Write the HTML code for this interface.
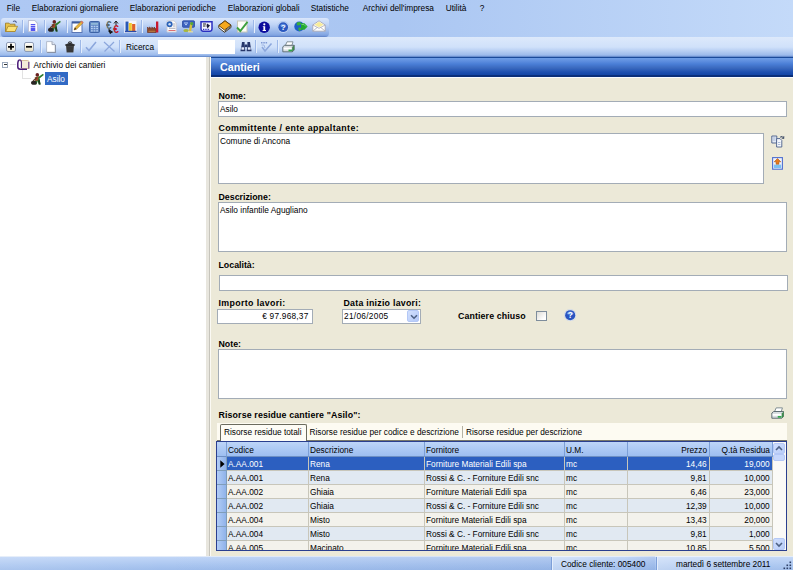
<!DOCTYPE html>
<html lang="it">
<head>
<meta charset="utf-8">
<title>Cantieri</title>
<style>
*{box-sizing:border-box;margin:0;padding:0}
html,body{width:793px;height:570px;overflow:hidden}
body{position:relative;background:#ece9d8;font-family:"Liberation Sans",sans-serif;font-size:8.3px;color:#000;line-height:10px}
.a{position:absolute}
.t{position:absolute;white-space:nowrap;height:10px;line-height:10px}
.b{font-weight:bold}
.l{font-size:8.8px}
#menubar{left:0;top:0;width:793px;height:37px;background:linear-gradient(90deg,#aec8f3 0%,#aac6f2 50%,#c4daf9 100%)}
#tb1{left:1px;top:17.5px;width:327.5px;height:19.5px;border-radius:3px 3px 4px 3px;background:linear-gradient(180deg,#dbe7fb 0%,#bfd4f6 35%,#88aae4 85%,#7c9fde 92%,#6488cc 96%,#6488cc 100%)}
#tb2{left:0;top:37.3px;width:793px;height:19.7px;background:linear-gradient(180deg,#dde9fb 0%,#d0e1fa 50%,#9fbdec 88%,#8eafe6 93%,#6a8fce 97%,#6a8fce 100%)}
.sep{position:absolute;width:1px;height:13px;background:#9db8e8;box-shadow:1px 0 0 #e4eefc}
#tree{left:0;top:57px;width:206px;height:500px;background:#fff}
#split{left:206px;top:57px;width:5px;height:499px;background:#e8e6de;border-right:1px solid #fbfaf4}
#split i{position:absolute;left:3px;top:0;width:1px;height:100%;background:#c6c4bc}
#hdr{left:211px;top:57px;width:582px;height:21px;background:linear-gradient(180deg,#1a4a9a 0px,#1a4a9a 1px,#6b9be5 1.5px,#5f8fdf 4px,#4a7ed6 7px,#3a69be 11px,#1e50b0 15px,#1447a8 17.5px,#0a2f7a 18.5px,#0a2f7a 19.5px,#f8fbff 20px,#f8fbff 21px)}
#status{left:0;top:555.5px;width:793px;height:15px;background:linear-gradient(180deg,#c1d6f7 0%,#adc8f1 50%,#9cbbea 100%);border-top:1px solid #e3ecf9}
.inp{position:absolute;background:#fff;border:1px solid #a3acb6}

#grid{left:216px;top:441px;width:571px;height:110px;background:#fff;border:1px solid #2a3f8f;overflow:hidden}
#grid .h{position:absolute;top:0;height:15px;background:linear-gradient(180deg,#bdd5f8,#9dbef1);border-right:1px solid #7c9fd6;border-bottom:1px solid #6d8fc4}
#grid .r{position:absolute;left:0;width:556px;height:14px;border-bottom:1px solid #c8c6ba}
#grid .r i{font-style:normal;position:absolute;top:0;height:13px;border-right:1px solid #c8c6ba}
#grid .rh{position:absolute;left:0;width:10px;height:14px;background:linear-gradient(90deg,#b2cdf6,#8fb2ea);border-right:1px solid #7f9db9;border-bottom:1px solid #7f9db9}
.g{position:absolute;white-space:nowrap;height:10px;line-height:10px}
</style>
</head>
<body>
<div id="menubar" class="a"></div>
<div id="tb1" class="a"></div>
<div id="tb2" class="a"></div>
<div id="tree" class="a"></div>
<div id="split" class="a"><i></i></div>
<div id="hdr" class="a"></div>
<div id="status" class="a"></div>

<!-- menu -->
<span class="t m" style="left:6.7px;top:2.6px">File</span>
<span class="t m" style="left:31.7px;top:2.6px">Elaborazioni giornaliere</span>
<span class="t m" style="left:129.7px;top:2.6px">Elaborazioni periodiche</span>
<span class="t m" style="left:227.7px;top:2.6px">Elaborazioni globali</span>
<span class="t m" style="left:310.7px;top:2.6px">Statistiche</span>
<span class="t m" style="left:362.7px;top:2.6px">Archivi dell'impresa</span>
<span class="t m" style="left:445.7px;top:2.6px">Utilità</span>
<span class="t m" style="left:479.7px;top:2.6px">?</span>
<!-- toolbar2 text -->
<span class="t" id="ric" style="left:126px;top:42px">Ricerca</span>
<div class="a" id="sbox" style="left:158px;top:40px;width:77px;height:14px;background:#fff"></div>
<!-- tree -->
<span class="t" id="tr1" style="left:33.5px;top:59.5px">Archivio dei cantieri</span>
<div class="a" id="sel" style="left:45px;top:72px;width:23px;height:13px;background:#316ac5"></div>
<span class="t" id="tr2" style="left:47px;top:74px;color:#fff">Asilo</span>
<!-- header -->
<span class="t b" id="htx" style="left:220px;top:61px;color:#fff;font-size:10.7px;line-height:12px;height:12px">Cantieri</span>

<!-- form -->
<span class="t b l" style="left:218.5px;top:91px">Nome:</span>
<div class="inp" style="left:218px;top:101.3px;width:569px;height:16.2px"></div>
<span class="t" style="left:220px;top:103.7px">Asilo</span>
<span class="t b l" style="letter-spacing:0.4px;left:218.5px;top:123px">Committente / ente appaltante:</span>
<div class="inp" style="left:218px;top:133px;width:545.7px;height:50.5px"></div>
<span class="t" style="left:220px;top:136.3px">Comune di Ancona</span>
<span class="t b l" style="left:218.5px;top:192px">Descrizione:</span>
<div class="inp" style="left:218px;top:202px;width:569px;height:50.4px"></div>
<span class="t" style="left:220px;top:205.3px">Asilo infantile Agugliano</span>
<span class="t b l" style="left:218.5px;top:260px">Località:</span>
<div class="inp" style="left:219px;top:274.7px;width:568.5px;height:16px"></div>
<span class="t b l" style="letter-spacing:0.37px;left:218.5px;top:297.5px">Importo lavori:</span>
<div class="inp" style="left:217px;top:308.6px;width:95.7px;height:15.4px"></div>
<span class="t" style="right:484.5px;top:311px;letter-spacing:0.22px">€ 97.968,37</span>
<span class="t b l" style="letter-spacing:0.25px;left:343.5px;top:297.5px">Data inizio lavori:</span>
<div class="inp" style="left:341.5px;top:308.6px;width:79.3px;height:15.4px"></div>
<span class="t" style="left:344px;top:311px;letter-spacing:0.3px">21/06/2005</span>
<span class="t b l" style="left:458px;top:311px;letter-spacing:.12px">Cantiere chiuso</span>
<div class="inp" style="left:536px;top:310.8px;width:10.6px;height:10.6px;border-color:#7e8d9c;background:linear-gradient(135deg,#dddcd6,#fff 80%)"></div>
<span class="t b l" style="left:218.5px;top:338.5px">Note:</span>
<div class="inp" style="left:217.7px;top:349px;width:569.3px;height:50.3px"></div>
<span class="t b l" style="letter-spacing:0.14px;left:218.5px;top:410.3px">Risorse residue cantiere "Asilo":</span>

<!-- tabs -->
<div class="a" id="tabstrip" style="left:217px;top:422.5px;width:570px;height:18.5px;background:#fdfbf2;border-bottom:1.5px solid #77776a"></div>
<div class="a" id="tab1" style="left:220.3px;top:424px;width:87px;height:17px;background:#fdfcf6;border:1px solid #6b6b5e;border-bottom:none;border-radius:2px 2px 0 0"></div>
<span class="t tb" style="left:224px;top:427px">Risorse residue totali</span>
<span class="t tb" style="left:309.5px;top:427px">Risorse residue per codice e descrizione</span>
<div class="a" style="left:461.7px;top:426px;width:1px;height:12px;background:#b5b2a4"></div>
<span class="t tb" style="left:466px;top:427px">Risorse residue per descrizione</span>
<!-- grid -->
<div class="a" id="grid">
<div class="h" style="left:0;width:10px"></div>
<div class="h" style="left:10px;width:82px"><span class="g" style="left:1px;top:2.5px">Codice</span></div>
<div class="h" style="left:92px;width:116px"><span class="g" style="left:1px;top:2.5px">Descrizione</span></div>
<div class="h" style="left:208px;width:140px"><span class="g" style="left:1px;top:2.5px">Fornitore</span></div>
<div class="h" style="left:348px;width:63px"><span class="g" style="left:1px;top:2.5px">U.M.</span></div>
<div class="h" style="left:411px;width:82px"><span class="g" style="right:2px;top:2.5px">Prezzo</span></div>
<div class="h" style="left:493px;width:63px"><span class="g" style="right:2px;top:2.5px">Q.tà Residua</span></div>
<div class="r" style="top:15px;background:#2c5fc0;color:#fff"><div class="rh"></div><svg class="a" style="left:2.7px;top:3px" width="5" height="8" viewBox="0 0 5 8"><path d="M.3 .3 L4.6 4 L.3 7.7Z" fill="#000"/></svg><i style="left:10px;width:82px"><span class="g" style="left:1px;top:2px">A.AA.001</span></i><i style="left:92px;width:116px"><span class="g" style="left:1px;top:2px">Rena</span></i><i style="left:208px;width:140px"><span class="g" style="left:1px;top:2px">Forniture Materiali Edili spa</span></i><i style="left:348px;width:63px"><span class="g" style="left:1px;top:2px">mc</span></i><i style="left:411px;width:82px"><span class="g" style="right:2.3px;top:2px">14,46</span></i><i style="left:493px;width:63px"><span class="g" style="right:2.3px;top:2px">19,000</span></i></div>
<div class="r" style="top:29px;background:#e1e9f2;color:#000"><div class="rh"></div><i style="left:10px;width:82px"><span class="g" style="left:1px;top:2px">A.AA.001</span></i><i style="left:92px;width:116px"><span class="g" style="left:1px;top:2px">Rena</span></i><i style="left:208px;width:140px"><span class="g" style="left:1px;top:2px">Rossi &amp; C. - Forniture Edili snc</span></i><i style="left:348px;width:63px"><span class="g" style="left:1px;top:2px">mc</span></i><i style="left:411px;width:82px"><span class="g" style="right:2.3px;top:2px">9,81</span></i><i style="left:493px;width:63px"><span class="g" style="right:2.3px;top:2px">10,000</span></i></div>
<div class="r" style="top:43px;background:#f3f2ec;color:#000"><div class="rh"></div><i style="left:10px;width:82px"><span class="g" style="left:1px;top:2px">A.AA.002</span></i><i style="left:92px;width:116px"><span class="g" style="left:1px;top:2px">Ghiaia</span></i><i style="left:208px;width:140px"><span class="g" style="left:1px;top:2px">Forniture Materiali Edili spa</span></i><i style="left:348px;width:63px"><span class="g" style="left:1px;top:2px">mc</span></i><i style="left:411px;width:82px"><span class="g" style="right:2.3px;top:2px">6,46</span></i><i style="left:493px;width:63px"><span class="g" style="right:2.3px;top:2px">23,000</span></i></div>
<div class="r" style="top:57px;background:#e1e9f2;color:#000"><div class="rh"></div><i style="left:10px;width:82px"><span class="g" style="left:1px;top:2px">A.AA.002</span></i><i style="left:92px;width:116px"><span class="g" style="left:1px;top:2px">Ghiaia</span></i><i style="left:208px;width:140px"><span class="g" style="left:1px;top:2px">Rossi &amp; C. - Forniture Edili snc</span></i><i style="left:348px;width:63px"><span class="g" style="left:1px;top:2px">mc</span></i><i style="left:411px;width:82px"><span class="g" style="right:2.3px;top:2px">12,39</span></i><i style="left:493px;width:63px"><span class="g" style="right:2.3px;top:2px">10,000</span></i></div>
<div class="r" style="top:71px;background:#f3f2ec;color:#000"><div class="rh"></div><i style="left:10px;width:82px"><span class="g" style="left:1px;top:2px">A.AA.004</span></i><i style="left:92px;width:116px"><span class="g" style="left:1px;top:2px">Misto</span></i><i style="left:208px;width:140px"><span class="g" style="left:1px;top:2px">Forniture Materiali Edili spa</span></i><i style="left:348px;width:63px"><span class="g" style="left:1px;top:2px">mc</span></i><i style="left:411px;width:82px"><span class="g" style="right:2.3px;top:2px">13,43</span></i><i style="left:493px;width:63px"><span class="g" style="right:2.3px;top:2px">20,000</span></i></div>
<div class="r" style="top:85px;background:#e1e9f2;color:#000"><div class="rh"></div><i style="left:10px;width:82px"><span class="g" style="left:1px;top:2px">A.AA.004</span></i><i style="left:92px;width:116px"><span class="g" style="left:1px;top:2px">Misto</span></i><i style="left:208px;width:140px"><span class="g" style="left:1px;top:2px">Rossi &amp; C. - Forniture Edili snc</span></i><i style="left:348px;width:63px"><span class="g" style="left:1px;top:2px">mc</span></i><i style="left:411px;width:82px"><span class="g" style="right:2.3px;top:2px">9,81</span></i><i style="left:493px;width:63px"><span class="g" style="right:2.3px;top:2px">1,000</span></i></div>
<div class="r" style="top:99px;background:#f3f2ec;color:#000"><div class="rh"></div><i style="left:10px;width:82px"><span class="g" style="left:1px;top:2px">A.AA.005</span></i><i style="left:92px;width:116px"><span class="g" style="left:1px;top:2px">Macinato</span></i><i style="left:208px;width:140px"><span class="g" style="left:1px;top:2px">Forniture Materiali Edili spa</span></i><i style="left:348px;width:63px"><span class="g" style="left:1px;top:2px">mc</span></i><i style="left:411px;width:82px"><span class="g" style="right:2.3px;top:2px">10,85</span></i><i style="left:493px;width:63px"><span class="g" style="right:2.3px;top:2px">5,500</span></i></div>
<div class="a" id="sb" style="left:556px;top:0;width:13px;height:109px;background:#fbfaf7">
<div class="a" style="left:0;top:1px;width:12px;height:11px;border:1px solid #b4c8f6;border-radius:2px;background:linear-gradient(135deg,#cfdefd,#b9cdf8)"></div>
<svg class="a" style="left:2px;top:3px" width="8" height="7" viewBox="0 0 8 7"><path d="M1 5 L4 2 L7 5" fill="none" stroke="#4d6185" stroke-width="1.6"/></svg>
<div class="a" style="left:0;top:12px;width:12px;height:7px;border:1px solid #b4c8f6;border-radius:2px;background:#c6d7fc"></div>
<div class="a" style="left:0;top:96px;width:12px;height:12px;border:1px solid #b4c8f6;border-radius:2px;background:linear-gradient(135deg,#cfdefd,#b9cdf8)"></div>
<svg class="a" style="left:2px;top:99px" width="8" height="7" viewBox="0 0 8 7"><path d="M1 2 L4 5 L7 2" fill="none" stroke="#4d6185" stroke-width="1.6"/></svg>
</div>
</div>
<!-- status -->
<div class="a" style="left:0;top:556px;width:551px;height:14px;background:linear-gradient(90deg,rgba(255,255,255,.12),rgba(255,255,255,0) 30%,rgba(60,100,180,.10))"></div>
<div class="a" style="left:552px;top:556px;width:103px;height:14px;background:linear-gradient(90deg,rgba(255,255,255,.35),rgba(255,255,255,0) 70%,rgba(60,100,180,.10))"></div>
<div class="a" style="left:657px;top:556px;width:136px;height:14px;background:linear-gradient(90deg,rgba(255,255,255,.35),rgba(255,255,255,.05) 80%)"></div>
<div class="a" style="left:551px;top:557px;width:1px;height:13px;background:#7d9fd8;box-shadow:1px 0 0 #e4eefc"></div>
<div class="a" style="left:655.5px;top:557px;width:1px;height:13px;background:#7d9fd8;box-shadow:1px 0 0 #e4eefc"></div>
<svg class="a" style="left:783px;top:561px" width="10" height="9" viewBox="0 0 10 9"><g fill="#2d3f66"><rect x="6.5" y=".5" width="1.6" height="1.6"/><rect x="3.5" y="3.5" width="1.6" height="1.6"/><rect x="6.5" y="3.5" width="1.6" height="1.6"/><rect x=".5" y="6.5" width="1.6" height="1.6"/><rect x="3.5" y="6.5" width="1.6" height="1.6"/><rect x="6.5" y="6.5" width="1.6" height="1.6"/></g></svg>
<span class="t st" style="left:561px;top:559px">Codice cliente: 005400</span>
<span class="t st" style="left:676px;top:559px">martedì 6 settembre 2011</span>
<!-- ICONS -->
<!-- toolbar1 icons -->
<div class="sep" style="left:22px;top:20px"></div>
<div class="sep" style="left:44px;top:20px"></div>
<div class="sep" style="left:66px;top:20px"></div>
<div class="sep" style="left:141px;top:20px"></div>
<div class="sep" style="left:253px;top:20px"></div>
<svg class="a" style="left:5px;top:19.8px" width="13" height="12.6" viewBox="0 0 13 12" preserveAspectRatio="none"><path d="M8 1.5 Q10 0 11.5 2.5" fill="none" stroke="#4a5a8a" stroke-width="1"/><path d="M0.5 3 L4 3 L5 4 L10 4 L10 11 L0.5 11 Z" fill="#e9c24a" stroke="#9a7a20" stroke-width=".8"/><path d="M0.8 11 L3 6 L12.5 6 L10 11 Z" fill="#fbe27a" stroke="#a8862a" stroke-width=".8"/></svg>
<svg class="a" style="left:28px;top:20px" width="10" height="12.3" viewBox="0 0 11 12" preserveAspectRatio="none"><path d="M.5 .5 L7.5 .5 L10.5 3.5 L10.5 11.5 L.5 11.5 Z" fill="#fdfdff" stroke="#b9bfd6" stroke-width="1"/><path d="M3 4.5h5M3 6.5h5M3 8.5h5M3 10h5" stroke="#5555f0" stroke-width="1.4"/></svg>
<svg class="a" style="left:48px;top:20px" width="14" height="12" viewBox="0 0 14 12"><circle cx="6.3" cy="1.9" r="1.8" fill="#6a2020"/><path d="M4.5 4 L8 3.5 L12 .8 L12.8 2 L8.5 5.5 L9.5 11.5 L7.8 11.5 L6.8 8 L5.5 11.5 L3.8 11.5 Z" fill="#2b7a2b"/><path d="M3.6 4.6 L7.6 3.6 L7 7.4 L4.6 8 Z" fill="#a8442a"/><path d="M8.6 6 L9.6 11.6 L7.8 11.6 L7 8Z" fill="#1a3a1a"/><ellipse cx="2.8" cy="9.8" rx="2.8" ry="2" fill="#2a2424"/><path d="M2 8 L6 4.5" stroke="#5a3a2a" stroke-width="1.1"/></svg>
<svg class="a" style="left:71px;top:20px" width="13" height="13" viewBox="0 0 13 13"><rect x="1" y="2" width="10" height="10.5" fill="#fff" stroke="#5b77b5" stroke-width="1"/><rect x="1" y="1.5" width="10" height="2" fill="#3e5c9e"/><path d="M3 10 L4 7.5 L10.5 1 L12.3 2.6 L5.6 9.2 Z" fill="#e8b53a" stroke="#9a6a1a" stroke-width=".5"/><path d="M3 10 L4 7.6 L5.4 9.1 Z" fill="#3a2a1a"/><path d="M10.5 1 L12.3 2.6 L11.5 3.4 L9.7 1.8Z" fill="#e06a6a"/></svg>
<svg class="a" style="left:89px;top:20.5px" width="11" height="12" viewBox="0 0 11 12"><rect x=".5" y=".5" width="10" height="11" rx="1" fill="#5c83c2" stroke="#3d63a5" stroke-width="1"/><rect x="2" y="1.8" width="7" height="2" fill="#8fb8d8"/><path d="M2 5.5h1.8M4.6 5.5h1.8M7.2 5.5h1.8M2 7.7h1.8M4.6 7.7h1.8M7.2 7.7h1.8M2 9.9h1.8M4.6 9.9h1.8M7.2 9.9h1.8" stroke="#b6d0f2" stroke-width="1.3"/></svg>
<svg class="a" style="left:106px;top:19.5px" width="14" height="14" viewBox="0 0 14 14"><text x="0" y="8.5" font-family="Liberation Sans,sans-serif" font-size="10" font-weight="bold" fill="#5a6a6a">€</text><text x="7.2" y="13" font-family="Liberation Sans,sans-serif" font-size="10" font-weight="bold" fill="#c01828">€</text><path d="M8 3.5 L10 1 L12 3.5 M10 1 L10 5" stroke="#222" stroke-width="1" fill="none"/><path d="M3 9 L3 12 L5 12 M4 10.5 L6.5 12 L4 13.5Z" stroke="#111" stroke-width=".9" fill="#111"/></svg>
<svg class="a" style="left:124px;top:20px" width="13" height="13" viewBox="0 0 13 13"><rect x=".5" y=".5" width="12" height="12" fill="#f4f6fc" stroke="#dfe6f6" stroke-width="1"/><rect x="1.5" y="1.5" width="3" height="9.5" fill="#2a5ab8"/><rect x="4.8" y="3" width="3" height="8" fill="#f0c830"/><rect x="8.1" y="4" width="3.2" height="7" fill="#e0622a"/><path d="M1 11.5h11.5" stroke="#2a4aa8" stroke-width="1.4"/></svg>
<svg class="a" style="left:146.5px;top:20.5px" width="12" height="12" viewBox="0 0 12 12"><path d="M.5 11.5 L.5 6 L2.5 8 L2.5 6 L4.8 8 L4.8 6 L7 8 L7 6 L9 8 L9 11.5 Z" fill="#8e4a2a" stroke="#6a2a1a" stroke-width=".6"/><rect x="9" y=".5" width="2.3" height="11" fill="#c8182e"/><path d="M1.5 10.3h7" stroke="#c88a4a" stroke-width=".8"/></svg>
<svg class="a" style="left:165.5px;top:20px" width="11" height="12.5" viewBox="0 0 11 12.5"><path d="M1 .8 L8 .8 L10.3 3 L10.3 12 L1 12 Z" fill="#fcfcfc" stroke="#c9c9d2" stroke-width=".9"/><circle cx="3.6" cy="4.3" r="3" fill="#2a62b8"/><circle cx="3.6" cy="4.3" r="1.2" fill="#cfe0f8"/><path d="M7 4h2.4M7 6h2.4M3 8.3h6.4" stroke="#9a9aa8" stroke-width=".8"/><path d="M2.5 10.5h7" stroke="#e07070" stroke-width="1"/></svg>
<svg class="a" style="left:182px;top:20px" width="13" height="13" viewBox="0 0 13 13"><rect x=".5" y=".8" width="12" height="6.5" rx=".8" fill="#3c62c0" stroke="#2a4aa0" stroke-width=".8"/><path d="M2 3 h4 M3 4.6h2" stroke="#b8d0f8" stroke-width="1"/><path d="M8.5 2 L10.5 4.5 L9 12 L6.5 12 Z" fill="#d6c040"/><circle cx="9.8" cy="3.6" r="1.6" fill="#58a838"/><ellipse cx="4" cy="10.5" rx="2.6" ry="1.5" fill="#a8b83a"/><path d="M6 11.8h5" stroke="#e8e0a0" stroke-width="1.2"/></svg>
<svg class="a" style="left:200px;top:21px" width="13" height="11" viewBox="0 0 13 11"><path d="M1 .8 H12 V8 Q12 10.3 9.5 10.3 H3.5 Q1 10.3 1 8 Z" fill="#f4f4ff" stroke="#2b2fc0" stroke-width="1.5"/><path d="M3 3h3M3 5h2.5" stroke="#222" stroke-width="1.1"/><path d="M7 2.5 L10 4.5 L7.5 7.5 L6.5 5 Z" fill="#1a1a3a"/><path d="M3 8.3h7" stroke="#2b2fc0" stroke-width="1.2" stroke-dasharray="1.3 1"/></svg>
<svg class="a" style="left:217.5px;top:19.5px" width="14" height="13" viewBox="0 0 14 13"><path d="M.8 5.5 L7 .8 L13 5.2 L13 7.5 L6.5 12.3 L.8 7.8 Z" fill="#fff" stroke="#3a2a10" stroke-width=".9"/><path d="M.8 5.5 L7 .8 L13 5.2 L6.5 10 Z" fill="#f6a81c" stroke="#5a3a08" stroke-width=".9"/><path d="M6.5 11.2 L12.5 6.6" stroke="#222" stroke-width=".8"/></svg>
<svg class="a" style="left:236px;top:19.5px" width="12.5" height="13" viewBox="0 0 12.5 13"><rect x="1.5" y="1" width="9.5" height="11" fill="#fdfdf8" stroke="#c8c8b8" stroke-width="1"/><path d="M1 7.5 L4.3 11 L11.5 1.8" fill="none" stroke="#3da03d" stroke-width="1.9"/></svg>
<svg class="a" style="left:258px;top:20.5px" width="12.4" height="12.4" viewBox="0 0 12.4 12.4"><circle cx="6.2" cy="6.2" r="5.7" fill="#0c0c9c"/><circle cx="6.3" cy="3.3" r="1.1" fill="#fff"/><path d="M4.8 5.2 H7.2 V9 H8 V9.9 H4.6 V9 H5.4 V6.1 H4.8 Z" fill="#fff"/></svg>
<svg class="a" style="left:276.5px;top:20.5px" width="12.4" height="12.4" viewBox="0 0 12.4 12.4"><circle cx="6.2" cy="6.2" r="5.8" fill="#d4e2f8" stroke="#9db8e6" stroke-width=".6"/><circle cx="6.2" cy="6.2" r="4.9" fill="#2a58c0"/><path d="M3 5 A3.4 3.4 0 0 1 9.4 5 Q6 6.5 3 5Z" fill="#5e8ee0"/><text x="6.2" y="9.2" text-anchor="middle" font-family="Liberation Sans,sans-serif" font-size="8" font-weight="bold" fill="#fff">?</text></svg>
<svg class="a" style="left:293.5px;top:21px" width="14" height="11" viewBox="0 0 14 11"><circle cx="5.3" cy="5.5" r="5" fill="#1f5fc8"/><path d="M3 1.5 Q6 .5 7.5 2 Q6.5 4.5 4 4.5 Q2 4 3 1.5Z M4.5 6.5 Q7 6 7.5 8 Q6.5 10 5 10 Q4 8 4.5 6.5Z" fill="#38b038"/><path d="M7 2.2 L10.5 2.2 L13.6 5.5 L10.5 8.8 L7 8.8 Z" fill="#22a832"/><path d="M7.5 3.5 L10 3.5 L12 5.5" stroke="#7ae07a" stroke-width=".8" fill="none"/></svg>
<svg class="a" style="left:311.5px;top:20px" width="14" height="12" viewBox="0 0 14 12"><path d="M.8 5 L7 .8 L13.2 5 L13.2 11.2 L.8 11.2 Z" fill="#fff" stroke="#a8a8b4" stroke-width=".9"/><path d="M2.5 4.8 L7 1.8 L11.5 4.8 L7 7.2 Z" fill="#f8ec9a"/><path d="M.8 5 L7 8.3 L13.2 5 M.8 11.2 L5.3 7.4 M13.2 11.2 L8.7 7.4" fill="none" stroke="#a8a8b4" stroke-width=".8"/></svg>
<!-- toolbar2 icons -->
<div class="sep" style="left:40px;top:40px"></div>
<div class="sep" style="left:80px;top:40px"></div>
<div class="sep" style="left:119px;top:40px"></div>
<div class="sep" style="left:255px;top:40px"></div>
<div class="sep" style="left:277px;top:40px"></div>
<div class="a" style="left:5.5px;top:41.5px;width:10.5px;height:10.5px;border:1px solid #8f9cb5;border-radius:2px;background:linear-gradient(180deg,#fff,#e8e6d8)"></div>
<svg class="a" style="left:7px;top:43px" width="8" height="8" viewBox="0 0 8 8"><path d="M1 3.8H7M4 .8V6.8" stroke="#000" stroke-width="1.7"/></svg>
<div class="a" style="left:23.5px;top:41.5px;width:10.5px;height:10.5px;border:1px solid #8f9cb5;border-radius:2px;background:linear-gradient(180deg,#fff,#e8e0c0)"></div>
<svg class="a" style="left:25px;top:43px" width="8" height="8" viewBox="0 0 8 8"><path d="M1 3.8H7" stroke="#000" stroke-width="1.7"/></svg>
<svg class="a" style="left:46px;top:41px" width="10" height="12" viewBox="0 0 10 12"><path d="M.6 .6 L6 .6 L9.2 3.6 L9.2 11.2 L.6 11.2 Z" fill="#fff" stroke="#a4adc0" stroke-width=".8"/><path d="M6 .6 L6 3.6 L9.2 3.6" fill="#dfe4ee" stroke="#8a94a8" stroke-width=".8"/><path d="M9.6 4 V11.6 H1.2" stroke="#7a8090" stroke-width=".8" fill="none"/></svg>
<svg class="a" style="left:63.5px;top:40.5px" width="12" height="12" viewBox="0 0 12 12"><path d="M4 1.6 Q6 -.2 8 1.6" fill="none" stroke="#333" stroke-width="1"/><path d="M.8 3.8 L6 1.6 L11.2 3.8 L10.2 5 L1.8 5 Z" fill="#2f2f2f"/><path d="M2 5 H10 L9.4 11.5 H2.6 Z" fill="#4a4a4a"/><path d="M4 5.5V11M6 5.5V11M8 5.5V11" stroke="#222" stroke-width=".8"/></svg>
<svg class="a" style="left:85px;top:41px" width="12" height="11" viewBox="0 0 12 11"><path d="M1 6.2 L4 9.5 L11 1" fill="none" stroke="#8ba6dc" stroke-width="1.5"/></svg>
<svg class="a" style="left:102.5px;top:41px" width="12.5" height="11" viewBox="0 0 12.5 11"><path d="M1 1 L11.5 10.5 M11 1 L1.5 10.5" fill="none" stroke="#8ba6dc" stroke-width="1.2"/></svg>
<svg class="a" style="left:239.5px;top:41px" width="12" height="11" viewBox="0 0 12 11"><path d="M2 1 H4.6 V4 L5.4 10.2 H.4 L1.6 4 Z M7.4 1 H10 L10.4 4 L11.6 10.2 H6.6 L7.4 4 Z" fill="#26366a"/><rect x="4.6" y="3.5" width="2.8" height="2.6" fill="#26366a"/><rect x="1.4" y="6.3" width="2.8" height="2.4" fill="#e8eefc"/><rect x="7.8" y="6.3" width="2.8" height="2.4" fill="#e8eefc"/></svg>
<svg class="a" style="left:260px;top:40.5px" width="12.5" height="12" viewBox="0 0 12.5 12"><path d="M1 1.8h1.5M3.3 1.8h1.5M5.6 1.8h1.5" stroke="#7f99d4" stroke-width="1.6"/><path d="M2 6 L5 10 L11.5 2.5" fill="none" stroke="#8ba6dc" stroke-width="1.5"/><path d="M1.5 4 L4 4 L5 7" fill="none" stroke="#9db5e4" stroke-width="1"/></svg>
<svg class="a" style="left:281.5px;top:41px" width="13" height="11.5" viewBox="0 0 13 11.5"><path d="M3.4 4.5 L5 .8 H11 L9.8 4.5 Z" fill="#fff" stroke="#6a7a80" stroke-width=".8"/><path d="M.8 5.8 L2.6 4.3 H12.2 L12.2 9 L10.4 10.8 H.8 Z" fill="#d8dde0" stroke="#4a5a60" stroke-width=".8"/><path d="M10.4 10.8 L10.4 6.2 L12.2 4.3" stroke="#4a5a60" stroke-width=".7" fill="none"/><rect x="1.6" y="6.6" width="8" height="1.8" fill="#fff"/><rect x="6.5" y="8.6" width="3.6" height="1.7" fill="#2fa84a"/><path d="M10.4 6.2 L12.2 4.4 L12.2 8.8 L10.4 10.6Z" fill="#3c8a4a"/></svg>
<!-- tree icons -->
<div class="a" style="left:2.3px;top:61.6px;width:6px;height:6px;border:1px solid #9aa8bc;background:#fff"></div>
<div class="a" style="left:3.8px;top:64.1px;width:3px;height:1px;background:#333"></div>
<div class="a" style="left:9.5px;top:64px;width:6px;height:1px;background:#e2e2e2"></div>
<div class="a" style="left:21.5px;top:69px;width:1px;height:9px;background:#e2e2e2"></div>
<div class="a" style="left:21.5px;top:78px;width:9px;height:1px;background:#e2e2e2"></div>
<svg class="a" style="left:16.5px;top:58.5px" width="13" height="11" viewBox="0 0 13 11"><path d="M3.5 1.5 L10.5 1.5 Q12 1.5 12 3 L12 9.5 L4.5 9.5 L4.5 3Z" fill="#f4ead8" stroke="#c8a878" stroke-width=".7"/><path d="M2.6 .8 Q.8 1.5 .8 4 L.8 8 Q.8 10.2 3.4 10.2 L10 10.2" fill="none" stroke="#4a1a78" stroke-width="1.5"/><path d="M2.6 .8 Q4.4 1 4.4 3.5 L4.4 9" fill="none" stroke="#4a1a78" stroke-width="1.1"/><path d="M11.8 3 V9.6" stroke="#5a2a88" stroke-width="1"/></svg>
<svg class="a" style="left:30.5px;top:72.5px" width="14" height="12" viewBox="0 0 14 12"><circle cx="6.3" cy="1.9" r="1.8" fill="#6a2020"/><path d="M4.5 4 L8 3.5 L12 .8 L12.8 2 L8.5 5.5 L9.5 11.5 L7.8 11.5 L6.8 8 L5.5 11.5 L3.8 11.5 Z" fill="#2b7a2b"/><path d="M3.6 4.6 L7.6 3.6 L7 7.4 L4.6 8 Z" fill="#a8442a"/><path d="M8.6 6 L9.6 11.6 L7.8 11.6 L7 8Z" fill="#1a3a1a"/><ellipse cx="2.8" cy="9.8" rx="2.8" ry="2" fill="#2a2424"/><path d="M2 8 L6 4.5" stroke="#5a3a2a" stroke-width="1.1"/></svg>
<!-- form icons -->
<svg class="a" style="left:770.5px;top:134.5px" width="14" height="13" viewBox="0 0 14 13"><path d="M.8 1 H5.8 V8 H.8 Z" fill="#e6ecf6" stroke="#4a5f8a" stroke-width=".9"/><path d="M5.6 3.6 H9 L10.8 5.4 V12 H5.6 Z" fill="#f4f7fc" stroke="#4a5f8a" stroke-width=".9"/><path d="M2 3h2.6M2 5h2.6M7 7.5h2.4M7 9.5h2.4" stroke="#8aa0c8" stroke-width=".7"/><path d="M9 2.2 Q11.6 .2 12.6 3.2 M12.8 1.2 L12.7 3.5 L10.6 3" fill="none" stroke="#2a3a5a" stroke-width=".9"/></svg>
<svg class="a" style="left:771.5px;top:156.5px" width="11" height="13" viewBox="0 0 11 13"><rect x=".6" y=".6" width="9.8" height="11.6" fill="#f0f4fc" stroke="#4f6fd0" stroke-width="1.1"/><rect x="1.8" y="7.6" width="7.4" height="3.4" fill="#7cc0f0"/><path d="M5.5 1.5 L8.8 4.8 H6.9 V7.2 H4.1 V4.8 H2.2 Z" fill="#e87a1a" stroke="#a04a0a" stroke-width=".5"/></svg>
<svg class="a" style="left:563.6px;top:309px" width="12.4" height="12.4" viewBox="0 0 12 12"><circle cx="6" cy="6" r="5.7" fill="#dfe6f0" stroke="#c4d0e4" stroke-width=".5"/><circle cx="6" cy="6" r="4.9" fill="#2a55c0"/><path d="M2.6 4.8 A3.6 3.6 0 0 1 9.4 4.8 Q6 6.4 2.6 4.8Z" fill="#6a96e6"/><text x="6" y="9" text-anchor="middle" font-family="Liberation Sans,sans-serif" font-size="8" font-weight="bold" fill="#fff">?</text></svg>
<svg class="a" style="left:770.5px;top:407px" width="13.5" height="12" viewBox="0 0 13 11.5"><path d="M3.4 4.5 L5 .8 H11 L9.8 4.5 Z" fill="#fff" stroke="#6a7a80" stroke-width=".8"/><path d="M.8 5.8 L2.6 4.3 H12.2 L12.2 9 L10.4 10.8 H.8 Z" fill="#d8dde0" stroke="#4a5a60" stroke-width=".8"/><rect x="1.6" y="6.6" width="8" height="1.8" fill="#fff"/><rect x="6.5" y="8.6" width="3.6" height="1.7" fill="#2fa84a"/><path d="M10.4 6.2 L12.2 4.4 L12.2 8.8 L10.4 10.6Z" fill="#3c8a4a"/></svg>
<!-- date dropdown button -->
<div class="a" style="left:406.7px;top:310.3px;width:12.5px;height:12px;border-radius:2px;border:1px solid #b4c8f6;background:linear-gradient(135deg,#d2e0fd,#b4c9f8)"></div>
<svg class="a" style="left:409.5px;top:314px" width="8" height="6" viewBox="0 0 8 6"><path d="M1 1.2 L4 4.2 L7 1.2" fill="none" stroke="#4d6185" stroke-width="1.6"/></svg>
<!-- /ICONS -->
</body>
</html>
